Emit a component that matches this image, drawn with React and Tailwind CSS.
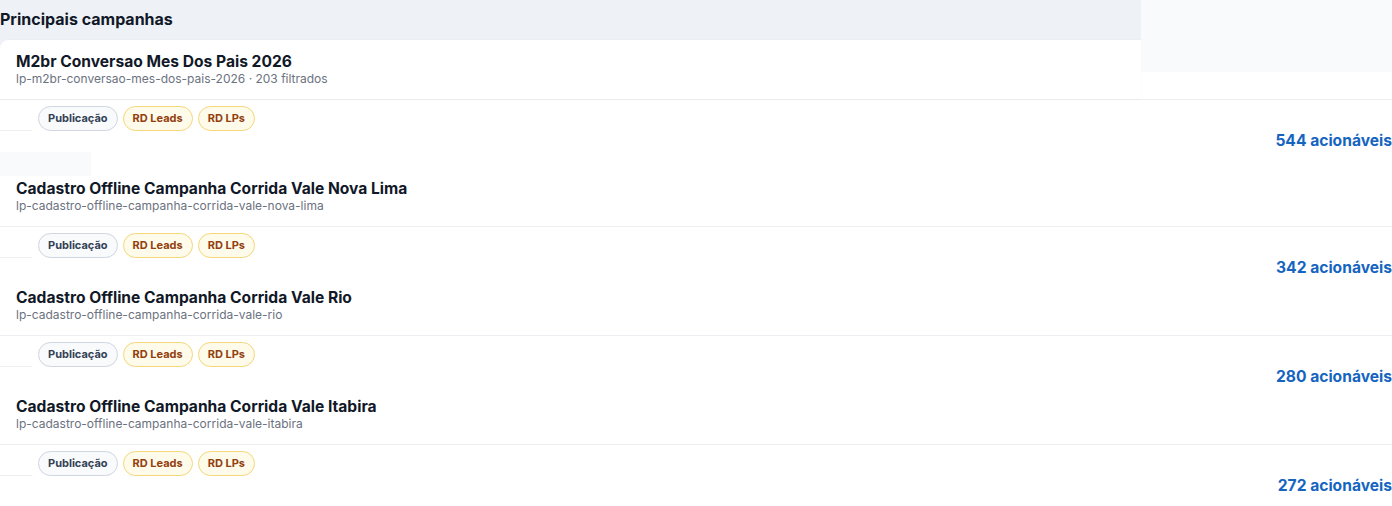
const campaigns = [
  {
    title: "M2br Conversao Mes Dos Pais 2026",
    slug: "lp-m2br-conversao-mes-dos-pais-2026 · 203 filtrados",
    actionable: 544,
  },
  {
    title: "Cadastro Offline Campanha Corrida Vale Nova Lima",
    slug: "lp-cadastro-offline-campanha-corrida-vale-nova-lima",
    actionable: 342,
  },
  {
    title: "Cadastro Offline Campanha Corrida Vale Rio",
    slug: "lp-cadastro-offline-campanha-corrida-vale-rio",
    actionable: 280,
  },
  {
    title: "Cadastro Offline Campanha Corrida Vale Itabira",
    slug: "lp-cadastro-offline-campanha-corrida-vale-itabira",
    actionable: 272,
  },
];

const Heading = ({ title, slug }) => (
  <>
    <div className="text-[15.6px] leading-5 pt-px -mb-px font-bold text-[#111827]">{title}</div>
    <div className="text-xs leading-4 text-[#6b7280]">{slug}</div>
  </>
);

const Badges = () => (
  <div className="flex items-end pt-1.5">
    <div className="w-8 h-px bg-[#eceef1] mr-1.5" />
    <div className="flex gap-[5px]">
      <span className="h-[25px] px-[9px] flex items-center rounded-full border border-[#cfd6e0] bg-[#f8fafc] text-[11px] font-bold text-[#334155]">
        Publicação
      </span>
      <span className="h-[25px] px-[9px] flex items-center rounded-full border border-[#f3d77a] bg-[#fffbeb] text-[11px] font-bold text-[#92400e]">
        RD Leads
      </span>
      <span className="h-[25px] px-[9px] flex items-center rounded-full border border-[#f3d77a] bg-[#fffbeb] text-[11px] font-bold text-[#92400e]">
        RD LPs
      </span>
    </div>
  </div>
);

const Actionable = ({ count }) => (
  <div className="text-right pt-px -mb-px text-[15.6px] leading-[18px] font-bold text-[#1565c0]">
    {count} acionáveis
  </div>
);

export default function App() {
  const [first, ...rest] = campaigns;

  return (
    <div className="w-[1392px] h-[506px] overflow-hidden bg-white font-['Inter',sans-serif]">
      {/* top: header band + first card, with the side box */}
      <div className="flex items-start">
        <div className="w-[1141px] bg-[#eef2f7]">
          <div className="h-10 pb-0.5 flex items-center text-base font-bold text-[#111827]">
            Principais campanhas
          </div>
          <div className="bg-white rounded-tl-lg shadow-[0_0_2px_rgba(0,0,0,0.06)] pt-[11px] pb-3 px-4">
            <Heading title={first.title} slug={first.slug} />
          </div>
        </div>
        <div className="w-[251px] h-[72px] bg-[#f8fafc]" />
      </div>
      <div className="h-px bg-[#eceef1]" />
      <Badges />
      <Actionable count={first.actionable} />
      <div className="mt-[3px] mb-[2px] w-[91px] h-6 bg-[#f8fafc]" />

      {rest.map((c, i) => (
        <div key={c.slug} className={i === 0 ? "" : "mt-[11px]"}>
          <div className="px-4 pb-3">
            <Heading title={c.title} slug={c.slug} />
          </div>
          <div className="h-px bg-[#eceef1]" />
          <Badges />
          <Actionable count={c.actionable} />
        </div>
      ))}
    </div>
  );
}
